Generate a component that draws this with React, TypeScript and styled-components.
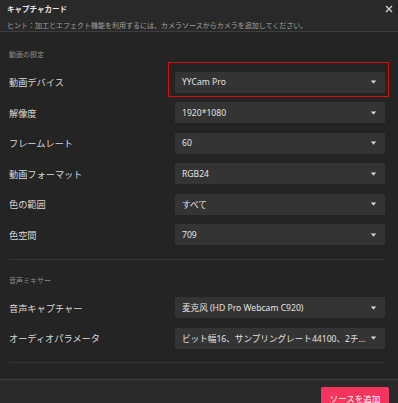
import React from 'react';
import styled, {createGlobalStyle} from 'styled-components';

const GlobalStyle = createGlobalStyle`
	html, body {
		margin: 0;
		padding: 0;
		background: #242424;
		overflow: hidden;
	}
	* {
		box-sizing: border-box;
	}
`;

const Dialog = styled.div`
	width: 398px;
	height: 403px;
	display: flex;
	flex-direction: column;
	background: #242424;
	font-family: 'Noto Sans', 'Noto Sans CJK JP', sans-serif;
	color: #dcdcdc;
	overflow: hidden;
`;

const Header = styled.div`
	height: 34px;
	padding: 3px 5px 0 7px;
	background: #292929;
	border-bottom: 1px solid #3d3d3d;
`;

const TitleRow = styled.div`
	display: flex;
	justify-content: space-between;
	align-items: center;
	height: 12px;
`;

const Title = styled.div`
	font-size: 7.5px;
	font-weight: 700;
	color: #e6e6e6;
	line-height: 12px;
`;

const Close = styled.div`
	width: 8px;
	height: 8px;
	display: flex;
	color: #cfcfcf;
`;

const Hint = styled.div`
	margin-top: 6px;
	font-size: 7px;
	line-height: 10px;
	color: #a0a0a0;
	white-space: nowrap;
`;

const Body = styled.div`
	flex: 1;
	padding: 0 13px 0 9px;
`;

const Section = styled.div<{$top: number}>`
	padding-top: ${p => p.$top}px;
	padding-bottom: 13.5px;
	border-bottom: 1px solid #333333;
`;

const SectionLabel = styled.div`
	font-size: 7px;
	line-height: 10px;
	color: #8c8c8c;
	margin-bottom: 11.5px;
`;

const Rows = styled.div`
	display: grid;
	grid-template-columns: 166px minmax(0, 1fr);
	row-gap: 9.5px;
	align-items: center;
`;

const Label = styled.div`
	font-size: 9.2px;
	color: #dadada;
	white-space: nowrap;
`;

const SelectWrap = styled.div`
	position: relative;
	min-width: 0;
`;

const Select = styled.div`
	height: 21px;
	display: flex;
	align-items: center;
	padding: 0 9px 0 7px;
	background: #343434;
	border-radius: 2px;
	font-size: 8.6px;
	color: #e2e2e2;
`;

const Value = styled.span`
	flex: 1;
	min-width: 0;
	overflow: hidden;
	text-overflow: ellipsis;
	white-space: nowrap;
`;

const Caret = styled.svg`
	width: 5px;
	height: 4px;
	margin-left: 4px;
	flex-shrink: 0;
`;

const Highlight = styled.div`
	position: absolute;
	left: -7px;
	right: -4px;
	top: -10px;
	bottom: -4px;
	border: 1.5px solid #d40f0f;
	pointer-events: none;
`;

const Footer = styled.div`
	height: 24px;
	margin-top: 16px;
	padding: 7px 9px 0 0;
	display: flex;
	justify-content: flex-end;
	background: #2a2a2a;
	border-top: 1px solid #3d3d3d;
`;

const AddButton = styled.button`
	width: 68px;
	height: 22px;
	border: none;
	border-radius: 2px;
	background: #f5355d;
	color: #ffffff;
	font-family: 'Noto Sans CJK JP', sans-serif;
	font-size: 8.5px;
	padding: 0;
	align-self: flex-start;
`;

type Field = {label: string; value: string; highlight?: boolean};

const videoFields: Field[] = [
	{label: '動画デバイス', value: 'YYCam Pro', highlight: true},
	{label: '解像度', value: '1920*1080'},
	{label: 'フレームレート', value: '60'},
	{label: '動画フォーマット', value: 'RGB24'},
	{label: '色の範囲', value: 'すべて'},
	{label: '色空間', value: '709'},
];

const audioFields: Field[] = [
	{label: '音声キャプチャー', value: '麦克风 (HD Pro Webcam C920)'},
	{label: 'オーディオパラメータ', value: 'ビット幅16、サンプリングレート44100、2チャンネル'},
];

const renderRows = (fields: Field[]) =>
	fields.map(f => (
		<React.Fragment key={f.label}>
			<Label>{f.label}</Label>
			<SelectWrap>
				<Select>
					<Value>{f.value}</Value>
					<Caret viewBox="0 0 5 4">
						<path d="M0 0.4h5v0.9H0z M0.6 1.3h3.8L2.5 3.8z" fill="#d8d8d8" />
					</Caret>
				</Select>
				{f.highlight && <Highlight />}
			</SelectWrap>
		</React.Fragment>
	));

const App = () => (
	<>
		<GlobalStyle />
		<Dialog>
			<Header>
				<TitleRow>
					<Title>キャプチャカード</Title>
					<Close>
						<svg viewBox="0 0 8 8" width="8" height="8">
							<path d="M1 1L7 7M7 1L1 7" stroke="currentColor" strokeWidth="1.4" />
						</svg>
					</Close>
				</TitleRow>
				<Hint>ヒント：加工とエフェクト機能を利用するには、カメラソースからカメラを追加してください。</Hint>
			</Header>
			<Body>
				<Section $top={18}>
					<SectionLabel>動画の設定</SectionLabel>
					<Rows>{renderRows(videoFields)}</Rows>
				</Section>
				<Section $top={16}>
					<SectionLabel>音声ミキサー</SectionLabel>
					<Rows>{renderRows(audioFields)}</Rows>
				</Section>
			</Body>
			<Footer>
				<AddButton>ソースを追加</AddButton>
			</Footer>
		</Dialog>
	</>
);

export default App;
